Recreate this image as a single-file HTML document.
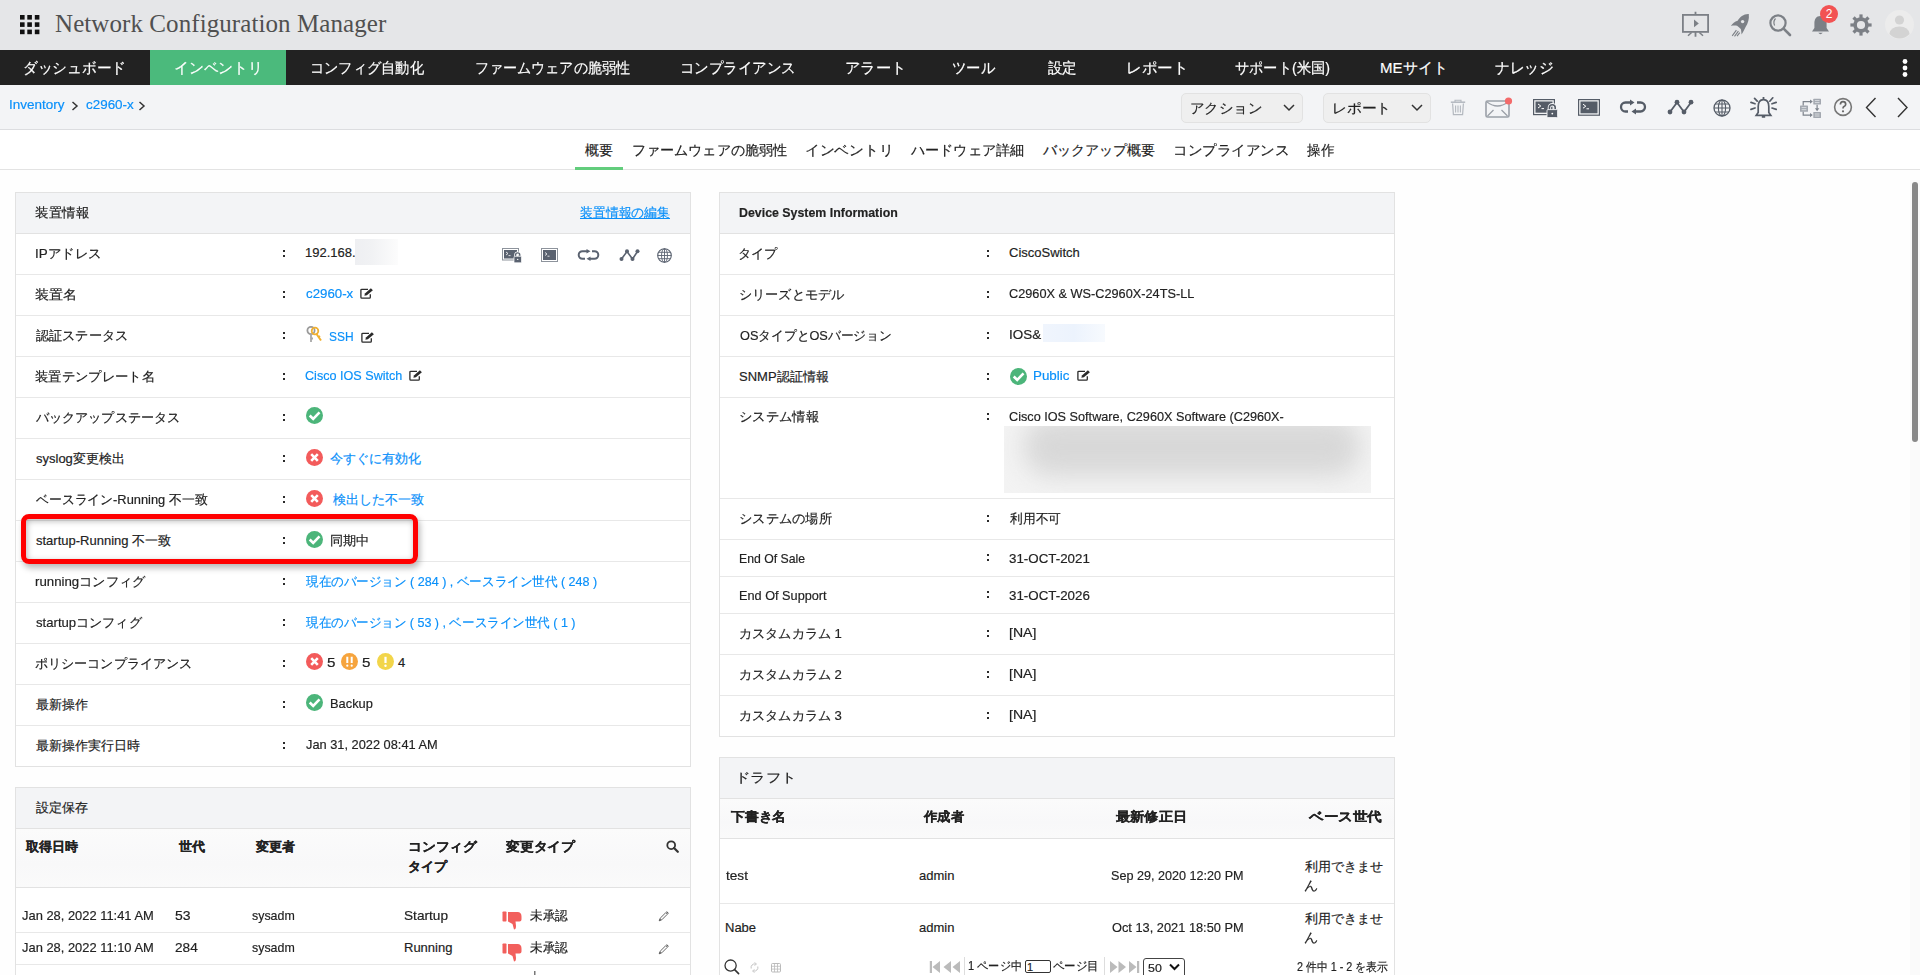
<!DOCTYPE html><html lang="ja"><head><meta charset="utf-8"><title>Network Configuration Manager</title><style>
*{box-sizing:border-box;margin:0;padding:0}
html,body{width:1920px;height:975px;overflow:hidden;background:#fefefe;font-family:"Liberation Sans",sans-serif;color:#333;font-size:13px}
.abs{position:absolute;white-space:nowrap}
.panel{position:absolute;border:1px solid #e2e2e2;background:#fff}
.hl{position:absolute;height:1px;background:#e6e6e6}
.lnk{color:#0a90fa}
.b{font-weight:bold}
.ft{display:inline-block;transform-origin:0 50%}
.abs>.ft,.tx{-webkit-text-stroke:0.18px currentColor}
</style></head><body>
<div class="abs" style="left:0px;top:0px;width:1920px;height:50px;background:#e5e6e8"></div>
<svg class="abs" style="left:20px;top:15px" width="20" height="20" viewBox="0 0 20 20"><g fill="#111"><rect x="0" y="0" width="4.6" height="4.6"/><rect x="7.3" y="0" width="4.6" height="4.6"/><rect x="14.8" y="0" width="4.6" height="4.6"/><rect x="0" y="7.3" width="4.6" height="4.6"/><rect x="7.3" y="7.3" width="4.6" height="4.6"/><rect x="14.8" y="7.3" width="4.6" height="4.6"/><rect x="0" y="14.6" width="4.6" height="4.6"/><rect x="7.3" y="14.6" width="4.6" height="4.6"/><rect x="14.8" y="14.6" width="4.6" height="4.6"/></g></svg>
<div class="abs" style="left:55px;top:10px;font-family:'Liberation Serif',serif;font-size:25px;color:#505050;letter-spacing:0.08px">Network Configuration Manager</div>
<svg class="abs" style="left:1682px;top:11px" width="28" height="27" viewBox="0 0 28 27"><rect x="0.9" y="3.9" width="25.2" height="17" fill="none" stroke="#7c8086" stroke-width="1.8"/><path d="M13.5 0.8 V4 M13.5 21 V25.8" stroke="#7c8086" stroke-width="1.8"/><path d="M9.6 21.5 L6 24.8 M17.4 21.5 L21 24.8" stroke="#7c8086" stroke-width="1.5"/><path d="M12 8.6 L16.8 12.4 L12 16.2 Z" fill="#7c8086"/></svg>
<svg class="abs" style="left:1730px;top:13px" width="21" height="24" viewBox="0 0 21 24"><path d="M18.8 1 C19.4 6 18 10.5 15.6 14 C14.6 16.5 13 19 11.6 21.6 C11.3 19.2 11.3 17.6 10.8 15.9 C9.6 14.9 8.2 13.9 7.1 12.8 C5.1 12.4 3 12.4 0.9 13 C2.4 10.6 4.8 8.6 7.6 7.8 C9.8 3.8 14 0.7 18.8 1 Z" fill="#7c8086"/><circle cx="12.6" cy="8.6" r="1.7" fill="#e5e6e8"/><path d="M2.2 22.8 L6.4 17.2 M4.5 23.3 L8.4 18.2 M7 23.2 L9.8 19.6" stroke="#7c8086" stroke-width="1.1"/></svg>
<svg class="abs" style="left:1769px;top:14px" width="23" height="23" viewBox="0 0 23 23"><circle cx="9" cy="9" r="7.6" fill="none" stroke="#7c8086" stroke-width="2.2"/><path d="M6.5 4.5 Q3.8 7.5 5.6 11.4" fill="none" stroke="#7c8086" stroke-width="1.2"/><path d="M14.6 14.6 L21 21" stroke="#7c8086" stroke-width="2.6" stroke-linecap="round"/></svg>
<svg class="abs" style="left:1811px;top:14px" width="19" height="22" viewBox="0 0 19 22"><path d="M9.5 2 C5 2 3.4 5.5 3.4 9.5 V14 L1 17.6 H18 L15.6 14 V9.5 C15.6 5.5 14 2 9.5 2 Z" fill="#7c8086"/><path d="M7.3 18.8 Q9.5 21.6 11.7 18.8 Z" fill="#7c8086"/></svg>
<svg class="abs" style="left:1820px;top:5px" width="18" height="18" viewBox="0 0 18 18"><circle cx="9" cy="9" r="9" fill="#f25353"/><text x="9" y="13.3" font-size="12" text-anchor="middle" fill="#fff" font-family="Liberation Sans">2</text></svg>
<svg class="abs" style="left:1850px;top:14px" width="22" height="22" viewBox="0 0 22 22"><rect x="9.4" y="0.4" width="3.2" height="4.2" fill="#7c8086" transform="rotate(0 11 11)"/><rect x="9.4" y="0.4" width="3.2" height="4.2" fill="#7c8086" transform="rotate(45 11 11)"/><rect x="9.4" y="0.4" width="3.2" height="4.2" fill="#7c8086" transform="rotate(90 11 11)"/><rect x="9.4" y="0.4" width="3.2" height="4.2" fill="#7c8086" transform="rotate(135 11 11)"/><rect x="9.4" y="0.4" width="3.2" height="4.2" fill="#7c8086" transform="rotate(180 11 11)"/><rect x="9.4" y="0.4" width="3.2" height="4.2" fill="#7c8086" transform="rotate(225 11 11)"/><rect x="9.4" y="0.4" width="3.2" height="4.2" fill="#7c8086" transform="rotate(270 11 11)"/><rect x="9.4" y="0.4" width="3.2" height="4.2" fill="#7c8086" transform="rotate(315 11 11)"/><circle cx="11" cy="11" r="5.9" fill="none" stroke="#7c8086" stroke-width="3.6"/></svg>
<svg class="abs" style="left:1885px;top:10px" width="29" height="29" viewBox="0 0 29 29"><circle cx="14.5" cy="14.5" r="14.5" fill="#ececec"/><circle cx="14.5" cy="10" r="4.6" fill="#d3d3d3"/><path d="M4.4 24 Q5.5 16.5 14.5 16.5 Q23.5 16.5 24.6 24 Q20 28.5 14.5 28.5 Q9 28.5 4.4 24 Z" fill="#d3d3d3"/></svg>
<div class="abs" style="left:0px;top:50px;width:1920px;height:35px;background:#222"></div>
<div class="abs" style="left:150px;top:50px;width:136px;height:35px;background:#4bba7c"></div>
<div class="abs" style="left:23.04px;top:57.5px;height:20px;line-height:20px;font-size:15px;color:#fff;"><span class="ft" style="transform:scaleX(0.9802)">ダッシュボード</span></div>
<div class="abs" style="left:174.02px;top:57.5px;height:20px;line-height:20px;font-size:15px;color:#fff;"><span class="ft" style="transform:scaleX(0.9881)">インベントリ</span></div>
<div class="abs" style="left:310.10px;top:57.5px;height:20px;line-height:20px;font-size:15px;color:#fff;"><span class="ft" style="transform:scaleX(0.9492)">コンフィグ自動化</span></div>
<div class="abs" style="left:475.12px;top:57.5px;height:20px;line-height:20px;font-size:15px;color:#fff;"><span class="ft" style="transform:scaleX(0.9387)">ファームウェアの脆弱性</span></div>
<div class="abs" style="left:680.07px;top:57.5px;height:20px;line-height:20px;font-size:15px;color:#fff;"><span class="ft" style="transform:scaleX(0.9655)">コンプライアンス</span></div>
<div class="abs" style="left:844.98px;top:57.5px;height:20px;line-height:20px;font-size:15px;color:#fff;"><span class="ft" style="transform:scaleX(1.0182)">アラート</span></div>
<div class="abs" style="left:952.05px;top:57.5px;height:20px;line-height:20px;font-size:15px;color:#fff;"><span class="ft" style="transform:scaleX(0.9545)">ツール</span></div>
<div class="abs" style="left:1048.00px;top:57.5px;height:20px;line-height:20px;font-size:15px;color:#fff;"><span class="ft" style="transform:scaleX(0.9655)">設定</span></div>
<div class="abs" style="left:1125.93px;top:57.5px;height:20px;line-height:20px;font-size:15px;color:#fff;"><span class="ft" style="transform:scaleX(1.0370)">レポート</span></div>
<div class="abs" style="left:1235.05px;top:57.5px;height:20px;line-height:20px;font-size:15px;color:#fff;"><span class="ft" style="transform:scaleX(0.9490)">サポート(米国)</span></div>
<div class="abs" style="left:1380.00px;top:57.5px;height:20px;line-height:20px;font-size:15px;color:#fff;"><span class="ft" style="transform:scaleX(1.0000)">MEサイト</span></div>
<div class="abs" style="left:1495.02px;top:57.5px;height:20px;line-height:20px;font-size:15px;color:#fff;"><span class="ft" style="transform:scaleX(0.9828)">ナレッジ</span></div>
<svg class="abs" style="left:1901px;top:58px" width="8" height="20" viewBox="0 0 8 20"><circle cx="4" cy="3.5" r="2.4" fill="#fff"/><circle cx="4" cy="10" r="2.4" fill="#fff"/><circle cx="4" cy="16.5" r="2.4" fill="#fff"/></svg>
<div class="abs" style="left:0px;top:85px;width:1920px;height:44px;background:#f3f4f6"></div>
<div class="abs" style="left:0px;top:129px;width:1920px;height:1px;background:#dcdde0"></div>
<div class="abs" style="left:8.96px;top:97.0px;height:16px;line-height:16px;font-size:13px;color:#0a90fa;"><span class="ft" style="transform:scaleX(1.0377)">Inventory</span></div>
<svg class="abs" style="left:71px;top:101px" width="8" height="10" viewBox="0 0 8 10"><path d="M1.5 1 L6 5 L1.5 9" fill="none" stroke="#333" stroke-width="1.5"/></svg>
<div class="abs" style="left:85.50px;top:97.0px;height:16px;line-height:16px;font-size:13px;color:#0a90fa;"><span class="ft" style="transform:scaleX(1.0326)">c2960-x</span></div>
<svg class="abs" style="left:138px;top:101px" width="8" height="10" viewBox="0 0 8 10"><path d="M1.5 1 L6 5 L1.5 9" fill="none" stroke="#333" stroke-width="1.5"/></svg>
<div class="abs" style="left:1181px;top:93px;width:122px;height:30px;background:#efefef;border:1px solid #e2e2e2;border-radius:5px"></div>
<div class="abs" style="left:1189.94px;top:100.0px;height:16px;line-height:16px;font-size:14px;color:#222;"><span class="ft" style="transform:scaleX(1.0299)">アクション</span></div>
<svg class="abs" style="left:1283px;top:104px" width="12" height="8" viewBox="0 0 12 8"><path d="M1 1 L6 6 L11 1" fill="none" stroke="#333" stroke-width="1.5"/></svg>
<div class="abs" style="left:1323px;top:93px;width:108px;height:30px;background:#efefef;border:1px solid #e2e2e2;border-radius:5px"></div>
<div class="abs" style="left:1332.38px;top:100.0px;height:16px;line-height:16px;font-size:14px;color:#222;"><span class="ft" style="transform:scaleX(1.0588)">レポート</span></div>
<svg class="abs" style="left:1411px;top:104px" width="12" height="8" viewBox="0 0 12 8"><path d="M1 1 L6 6 L11 1" fill="none" stroke="#333" stroke-width="1.5"/></svg>
<svg class="abs" style="left:1450px;top:99px" width="16" height="17" viewBox="0 0 16 17"><path d="M5 3 V1.2 H11 V3" fill="none" stroke="#b3b8bf" stroke-width="1.1"/><path d="M0.8 3.2 H15.2" stroke="#b3b8bf" stroke-width="1.5"/><path d="M2.6 4.5 L3.4 15.6 H12.6 L13.4 4.5" fill="none" stroke="#b3b8bf" stroke-width="1.2"/><path d="M5.6 6.5 V13.6 M8 6.5 V13.6 M10.4 6.5 V13.6" stroke="#b3b8bf" stroke-width="1.1"/></svg>
<svg class="abs" style="left:1484px;top:97px" width="29" height="22" viewBox="0 0 29 22"><rect x="2" y="4" width="23" height="16" rx="1.5" fill="none" stroke="#9ba0a8" stroke-width="1.6"/><path d="M3 5 Q13.5 13 24 5 M3.5 19 L9.5 13 M23.5 19 L17.5 13" fill="none" stroke="#9ba0a8" stroke-width="1.3"/><circle cx="24.5" cy="4" r="3.6" fill="#f36a6a"/></svg>
<svg class="abs" style="left:1533px;top:99px" width="25" height="19" viewBox="0 0 25 19"><rect x="0.6" y="0.6" width="20.8" height="15" fill="none" stroke="#555c67" stroke-width="1.2"/><rect x="2.5" y="2.5" width="17" height="11.2" fill="#555c67"/><path d="M5 5 L7.8 7 L5 9 M8.5 9.6 H11" fill="none" stroke="#fff" stroke-width="1"/><path d="M16.4 11 V8.6 A2.9 2.9 0 0 1 22.2 8.6 V11" fill="none" stroke="#f3f4f6" stroke-width="3.4"/><path d="M16.4 11 V8.6 A2.9 2.9 0 0 1 22.2 8.6 V11" fill="none" stroke="#555c67" stroke-width="1.6"/><rect x="14" y="10.6" width="10.6" height="8" rx="1" fill="#555c67" stroke="#f3f4f6" stroke-width="0.9"/><circle cx="19.3" cy="14.6" r="0.9" fill="#fff"/></svg>
<svg class="abs" style="left:1578px;top:99px" width="22" height="17" viewBox="0 0 22 17"><rect x="0.6" y="0.6" width="20.8" height="15.6" fill="none" stroke="#555c67" stroke-width="1.2"/><rect x="2.5" y="2.5" width="17" height="11.8" fill="#555c67"/><path d="M5 5.2 L7.8 7.2 L5 9.2 M8.5 9.8 H11" fill="none" stroke="#fff" stroke-width="1"/></svg>
<svg class="abs" style="left:1618px;top:99px" width="30" height="16" viewBox="0 0 30 16"><path d="M13 3.5 H7.5 A4.5 4.5 0 0 0 7.5 12.5 H10 M17 12.5 H22.5 A4.5 4.5 0 0 0 22.5 3.5 H19" fill="none" stroke="#555c67" stroke-width="2.3"/><path d="M12 0.5 L16.5 3.5 L12 6.5 Z M18 9.5 L13.5 12.5 L18 15.5 Z" fill="#555c67"/></svg>
<svg class="abs" style="left:1667px;top:99px" width="27" height="16" viewBox="0 0 27 16"><path d="M3 13 L10 3.5 L17 13 L24 3.5" fill="none" stroke="#555c67" stroke-width="1.8"/><circle cx="3" cy="13" r="2.4" fill="#555c67"/><circle cx="10" cy="3.2" r="2.4" fill="#555c67"/><circle cx="17" cy="13" r="2.4" fill="#555c67"/><circle cx="24" cy="3.2" r="2.4" fill="#555c67"/></svg>
<svg class="abs" style="left:1713px;top:99px" width="18" height="18" viewBox="0 0 18 18"><circle cx="9" cy="9" r="8" fill="none" stroke="#555c67" stroke-width="1.3"/><ellipse cx="9" cy="9" rx="3.6" ry="8" fill="none" stroke="#555c67" stroke-width="1.1"/><path d="M9 1 V17 M1 9 H17 M2 5 H16 M2 13 H16" stroke="#555c67" stroke-width="1.1"/></svg>
<svg class="abs" style="left:1750px;top:96px" width="28" height="23" viewBox="0 0 28 23"><path d="M13.5 3.6 C9.6 3.6 8.2 6.6 8.2 10.5 V16.4 L6.2 19.3 H20.8 L18.8 16.4 V10.5 C18.8 6.6 17.4 3.6 13.5 3.6 Z" fill="none" stroke="#555c67" stroke-width="1.7"/><path d="M13.5 1 V3.6 M11.8 20.8 H15.2" fill="none" stroke="#555c67" stroke-width="1.8"/><path d="M7.2 5.2 L4.6 2.4 M19.8 5.2 L22.8 1.8 M5 7.8 L1 6.4 M5 12 L1 13.4 M22 7.8 L26.2 6.4 M22 12 L26.2 13.4" stroke="#555c67" stroke-width="1.7" stroke-linecap="round"/></svg>
<svg class="abs" style="left:1799px;top:98px" width="23" height="21" viewBox="0 0 23 21"><rect x="1" y="7.5" width="8" height="6.3" rx="0.6" fill="#a3a8b0"/><path d="M2.6 9.6 H7.4 M2.6 11.7 H7.4" stroke="#e6e8eb" stroke-width="0.8"/><rect x="14.3" y="0.7" width="7.7" height="5.8" rx="0.6" fill="#a3a8b0"/><path d="M15.8 2.6 H20.5 M15.8 4.6 H20.5" stroke="#e6e8eb" stroke-width="0.8"/><rect x="14.3" y="14" width="7.7" height="6" rx="0.6" fill="#a3a8b0"/><path d="M15.8 16 H20.5 M15.8 18 H20.5" stroke="#e6e8eb" stroke-width="0.8"/><path d="M4.2 7.5 V3.6 H11.5 M4.2 13.8 V17.1 H11.5 M18.1 6.8 V10.8" fill="none" stroke="#7d838c" stroke-width="1.2"/><path d="M11 1.4 L13.8 3.6 L11 5.8 Z M11 14.9 L13.8 17.1 L11 19.3 Z M15.9 10.3 L18.1 13.2 L20.3 10.3 Z" fill="#7d838c"/></svg>
<svg class="abs" style="left:1833px;top:97px" width="20" height="20" viewBox="0 0 20 20"><circle cx="10" cy="10" r="8.4" fill="none" stroke="#777" stroke-width="1.6"/><path d="M7.4 7.6 Q7.4 4.6 10 4.6 Q12.7 4.6 12.7 7.2 Q12.7 8.8 11 9.6 Q10 10.1 10 11.6" fill="none" stroke="#666" stroke-width="1.7"/><circle cx="10" cy="14.3" r="1.1" fill="#666"/></svg>
<svg class="abs" style="left:1865px;top:97px" width="12" height="21" viewBox="0 0 12 21"><path d="M10.5 1 L1.5 10.5 L10.5 20" fill="none" stroke="#333" stroke-width="1.4"/></svg>
<svg class="abs" style="left:1897px;top:97px" width="12" height="21" viewBox="0 0 12 21"><path d="M1 1 L10 10.5 L1 20" fill="none" stroke="#333" stroke-width="1.4"/></svg>
<div class="abs" style="left:0px;top:130px;width:1920px;height:39px;background:#fff"></div>
<div class="abs" style="left:0px;top:169px;width:1920px;height:1px;background:#e3e3e3"></div>
<div class="abs" style="left:585.00px;top:141.0px;height:18px;line-height:18px;font-size:14px;color:#222;"><span class="ft" style="transform:scaleX(1.0000)">概要</span></div>
<div class="abs" style="left:631.99px;top:141.0px;height:18px;line-height:18px;font-size:14px;color:#222;"><span class="ft" style="transform:scaleX(1.0065)">ファームウェアの脆弱性</span></div>
<div class="abs" style="left:804.90px;top:141.0px;height:18px;line-height:18px;font-size:14px;color:#222;"><span class="ft" style="transform:scaleX(1.0506)">インベントリ</span></div>
<div class="abs" style="left:911.00px;top:141.0px;height:18px;line-height:18px;font-size:14px;color:#222;"><span class="ft" style="transform:scaleX(1.0090)">ハードウェア詳細</span></div>
<div class="abs" style="left:1043.00px;top:141.0px;height:18px;line-height:18px;font-size:14px;color:#222;"><span class="ft" style="transform:scaleX(1.0000)">バックアップ概要</span></div>
<div class="abs" style="left:1172.93px;top:141.0px;height:18px;line-height:18px;font-size:14px;color:#222;"><span class="ft" style="transform:scaleX(1.0370)">コンプライアンス</span></div>
<div class="abs" style="left:1307.00px;top:141.0px;height:18px;line-height:18px;font-size:14px;color:#222;"><span class="ft" style="transform:scaleX(0.9643)">操作</span></div>
<div class="abs" style="left:575px;top:167px;width:48px;height:3px;background:#62cd7c"></div>
<div class="abs" style="left:1910px;top:180px;width:10px;height:795px;background:#fafafa"></div>
<div class="abs" style="left:1912px;top:182px;width:6px;height:260px;background:#888;border-radius:3px"></div>
<div class="abs" style="left:15px;top:192px;width:676px;height:575px;background:#fff;border:1px solid #e2e2e2"></div>
<div class="abs" style="left:16px;top:193px;width:674px;height:40px;background:#f3f4f6"></div>
<div class="abs" style="left:16px;top:233px;width:674px;height:1px;background:#e2e2e2"></div>
<div class="abs" style="left:34.96px;top:205.0px;height:16px;line-height:16px;font-size:13px;color:#222;"><span class="ft" style="transform:scaleX(1.0400)">装置情報</span></div>
<div class="abs" style="left:580.00px;top:205.0px;height:16px;line-height:16px;font-size:13px;color:#0a90fa;"><span class="ft" style="transform:scaleX(0.9890)"><u>装置情報の編集</u></span></div>
<div class="abs" style="left:34.97px;top:246.0px;height:16px;line-height:16px;font-size:13px;color:#222;"><span class="ft" style="transform:scaleX(1.0323)">IPアドレス</span></div>
<div class="abs" style="left:283px;top:250px;width:2px;height:2px;background:#2a2a2a"></div>
<div class="abs" style="left:283px;top:255px;width:2px;height:2px;background:#2a2a2a"></div>
<div class="abs" style="left:16px;top:274px;width:674px;height:1px;background:#e8e8e8"></div>
<div class="abs" style="left:34.92px;top:287.0px;height:16px;line-height:16px;font-size:13px;color:#222;"><span class="ft" style="transform:scaleX(1.0833)">装置名</span></div>
<div class="abs" style="left:283px;top:291px;width:2px;height:2px;background:#2a2a2a"></div>
<div class="abs" style="left:283px;top:296px;width:2px;height:2px;background:#2a2a2a"></div>
<div class="abs" style="left:16px;top:315px;width:674px;height:1px;background:#e8e8e8"></div>
<div class="abs" style="left:36.00px;top:328.0px;height:16px;line-height:16px;font-size:13px;color:#222;"><span class="ft" style="transform:scaleX(1.0111)">認証ステータス</span></div>
<div class="abs" style="left:283px;top:332px;width:2px;height:2px;background:#2a2a2a"></div>
<div class="abs" style="left:283px;top:337px;width:2px;height:2px;background:#2a2a2a"></div>
<div class="abs" style="left:16px;top:356px;width:674px;height:1px;background:#e8e8e8"></div>
<div class="abs" style="left:34.97px;top:369.0px;height:16px;line-height:16px;font-size:13px;color:#222;"><span class="ft" style="transform:scaleX(1.0263)">装置テンプレート名</span></div>
<div class="abs" style="left:283px;top:373px;width:2px;height:2px;background:#2a2a2a"></div>
<div class="abs" style="left:283px;top:378px;width:2px;height:2px;background:#2a2a2a"></div>
<div class="abs" style="left:16px;top:397px;width:674px;height:1px;background:#e8e8e8"></div>
<div class="abs" style="left:36.00px;top:410.0px;height:16px;line-height:16px;font-size:13px;color:#222;"><span class="ft" style="transform:scaleX(1.0070)">バックアップステータス</span></div>
<div class="abs" style="left:283px;top:414px;width:2px;height:2px;background:#2a2a2a"></div>
<div class="abs" style="left:283px;top:419px;width:2px;height:2px;background:#2a2a2a"></div>
<div class="abs" style="left:16px;top:438px;width:674px;height:1px;background:#e8e8e8"></div>
<div class="abs" style="left:36.00px;top:451.0px;height:16px;line-height:16px;font-size:13px;color:#222;"><span class="ft" style="transform:scaleX(1.0000)">syslog変更検出</span></div>
<div class="abs" style="left:283px;top:455px;width:2px;height:2px;background:#2a2a2a"></div>
<div class="abs" style="left:283px;top:460px;width:2px;height:2px;background:#2a2a2a"></div>
<div class="abs" style="left:16px;top:479px;width:674px;height:1px;background:#e8e8e8"></div>
<div class="abs" style="left:36.00px;top:492.0px;height:16px;line-height:16px;font-size:13px;color:#222;"><span class="ft" style="transform:scaleX(0.9884)">ベースライン-Running 不一致</span></div>
<div class="abs" style="left:283px;top:496px;width:2px;height:2px;background:#2a2a2a"></div>
<div class="abs" style="left:283px;top:501px;width:2px;height:2px;background:#2a2a2a"></div>
<div class="abs" style="left:16px;top:520px;width:674px;height:1px;background:#e8e8e8"></div>
<div class="abs" style="left:36.00px;top:533.0px;height:16px;line-height:16px;font-size:13px;color:#222;"><span class="ft" style="transform:scaleX(1.0000)">startup-Running 不一致</span></div>
<div class="abs" style="left:283px;top:537px;width:2px;height:2px;background:#2a2a2a"></div>
<div class="abs" style="left:283px;top:542px;width:2px;height:2px;background:#2a2a2a"></div>
<div class="abs" style="left:16px;top:561px;width:674px;height:1px;background:#e8e8e8"></div>
<div class="abs" style="left:34.98px;top:574.0px;height:16px;line-height:16px;font-size:13px;color:#222;"><span class="ft" style="transform:scaleX(1.0187)">runningコンフィグ</span></div>
<div class="abs" style="left:283px;top:578px;width:2px;height:2px;background:#2a2a2a"></div>
<div class="abs" style="left:283px;top:583px;width:2px;height:2px;background:#2a2a2a"></div>
<div class="abs" style="left:16px;top:602px;width:674px;height:1px;background:#e8e8e8"></div>
<div class="abs" style="left:36.00px;top:615.0px;height:16px;line-height:16px;font-size:13px;color:#222;"><span class="ft" style="transform:scaleX(1.0095)">startupコンフィグ</span></div>
<div class="abs" style="left:283px;top:619px;width:2px;height:2px;background:#2a2a2a"></div>
<div class="abs" style="left:283px;top:624px;width:2px;height:2px;background:#2a2a2a"></div>
<div class="abs" style="left:16px;top:643px;width:674px;height:1px;background:#e8e8e8"></div>
<div class="abs" style="left:34.99px;top:656.0px;height:16px;line-height:16px;font-size:13px;color:#222;"><span class="ft" style="transform:scaleX(1.0065)">ポリシーコンプライアンス</span></div>
<div class="abs" style="left:283px;top:660px;width:2px;height:2px;background:#2a2a2a"></div>
<div class="abs" style="left:283px;top:665px;width:2px;height:2px;background:#2a2a2a"></div>
<div class="abs" style="left:16px;top:684px;width:674px;height:1px;background:#e8e8e8"></div>
<div class="abs" style="left:36.00px;top:697.0px;height:16px;line-height:16px;font-size:13px;color:#222;"><span class="ft" style="transform:scaleX(1.0000)">最新操作</span></div>
<div class="abs" style="left:283px;top:701px;width:2px;height:2px;background:#2a2a2a"></div>
<div class="abs" style="left:283px;top:706px;width:2px;height:2px;background:#2a2a2a"></div>
<div class="abs" style="left:16px;top:725px;width:674px;height:1px;background:#e8e8e8"></div>
<div class="abs" style="left:36.00px;top:738.0px;height:16px;line-height:16px;font-size:13px;color:#222;"><span class="ft" style="transform:scaleX(1.0000)">最新操作実行日時</span></div>
<div class="abs" style="left:283px;top:742px;width:2px;height:2px;background:#2a2a2a"></div>
<div class="abs" style="left:283px;top:747px;width:2px;height:2px;background:#2a2a2a"></div>
<div class="abs" style="left:305.00px;top:244.5px;height:16px;line-height:16px;font-size:13px;color:#222;"><span class="ft" style="transform:scaleX(1.0000)">192.168.</span></div>
<div class="abs" style="left:355px;top:239px;width:43px;height:26px;background:linear-gradient(90deg,#eeeff2 0%,#f1f2f4 40%,#fcfcfc 100%)"></div>
<svg class="abs" style="left:502px;top:248px" width="20" height="15" viewBox="0 0 20 15"><rect x="0.5" y="0.5" width="16" height="11.5" fill="none" stroke="#8d939c" stroke-width="1"/><rect x="2" y="2" width="13" height="8.5" fill="#5a6270"/><path d="M4 4 L6 5.5 L4 7 M6.5 7.6 H8.5" fill="none" stroke="#fff" stroke-width="0.8"/><path d="M13.6 8.6 V7 A2.1 2.1 0 0 1 17.8 7 V8.6" fill="none" stroke="#fff" stroke-width="2.8"/><path d="M13.6 8.6 V7 A2.1 2.1 0 0 1 17.8 7 V8.6" fill="none" stroke="#5a6270" stroke-width="1.3"/><rect x="12" y="8.3" width="7.5" height="6.5" rx="0.8" fill="#5a6270" stroke="#fff" stroke-width="0.7"/><circle cx="15.7" cy="11.4" r="0.7" fill="#fff"/></svg>
<svg class="abs" style="left:541px;top:248px" width="17" height="14" viewBox="0 0 17 14"><rect x="0.5" y="0.5" width="16" height="13" fill="none" stroke="#8d939c" stroke-width="1"/><rect x="2" y="2" width="13" height="10" fill="#5a6270"/><path d="M4 4.5 L6 6 L4 7.5 M6.5 8.2 H8.5" fill="none" stroke="#fff" stroke-width="0.8"/></svg>
<svg class="abs" style="left:577px;top:249px" width="23" height="12" viewBox="0 0 23 12"><path d="M10 2.2 H5.5 A3.8 3.8 0 0 0 5.5 9.8 H8 M13 9.8 H17.5 A3.8 3.8 0 0 0 17.5 2.2 H15" fill="none" stroke="#5a6270" stroke-width="2"/><path d="M9.5 0 L13.5 2.2 L9.5 4.4 Z M13.5 7.6 L9.5 9.8 L13.5 12 Z" fill="#5a6270"/></svg>
<svg class="abs" style="left:619px;top:249px" width="21" height="12" viewBox="0 0 21 12"><path d="M2.5 10 L8 2.5 L13.5 10 L18.5 2.5" fill="none" stroke="#5a6270" stroke-width="1.6"/><circle cx="2.5" cy="10" r="2" fill="#5a6270"/><circle cx="8" cy="2.3" r="2" fill="#5a6270"/><circle cx="13.5" cy="10" r="2" fill="#5a6270"/><circle cx="18.5" cy="2.3" r="2" fill="#5a6270"/></svg>
<svg class="abs" style="left:657px;top:248px" width="15" height="15" viewBox="0 0 15 15"><circle cx="7.5" cy="7.5" r="6.8" fill="none" stroke="#5a6270" stroke-width="1.1"/><ellipse cx="7.5" cy="7.5" rx="3" ry="6.8" fill="none" stroke="#5a6270" stroke-width="0.9"/><path d="M7.5 0.7 V14.3 M0.7 7.5 H14.3 M1.6 4.3 H13.4 M1.6 10.7 H13.4" stroke="#5a6270" stroke-width="0.9"/></svg>
<div class="abs" style="left:306.00px;top:285.5px;height:16px;line-height:16px;font-size:13px;color:#0a90fa;"><span class="ft" style="transform:scaleX(1.0217)">c2960-x</span></div>
<svg class="abs" style="left:360px;top:288px" width="14" height="11" viewBox="0 0 14 11"><path d="M8 1.3 H1.8 Q0.9 1.3 0.9 2.2 V9.2 Q0.9 10.1 1.8 10.1 H9.4 Q10.3 10.1 10.3 9.2 V6.2" fill="none" stroke="#2b2b2b" stroke-width="1.3"/><path d="M4.4 7.8 L4.9 5.5 L10.9 0.3 L12.9 2.2 L6.9 7.3 Z" fill="#2b2b2b"/></svg>
<svg class="abs" style="left:306px;top:326px" width="16" height="17" viewBox="0 0 16 17"><circle cx="5" cy="4.5" r="3.6" fill="none" stroke="#9a9a9a" stroke-width="1.8"/><path d="M5 8 V16 M5 12.5 H7" stroke="#a8a8a8" stroke-width="1.8"/><circle cx="9" cy="5" r="3.3" fill="none" stroke="#f0b030" stroke-width="1.8"/><path d="M10.5 8 L15 14.5 M12.5 11 L14 10" stroke="#f0b030" stroke-width="2"/></svg>
<div class="abs" style="left:329.08px;top:328.5px;height:16px;line-height:16px;font-size:13px;color:#0a90fa;"><span class="ft" style="transform:scaleX(0.9200)">SSH</span></div>
<svg class="abs" style="left:361px;top:332px" width="14" height="11" viewBox="0 0 14 11"><path d="M8 1.3 H1.8 Q0.9 1.3 0.9 2.2 V9.2 Q0.9 10.1 1.8 10.1 H9.4 Q10.3 10.1 10.3 9.2 V6.2" fill="none" stroke="#2b2b2b" stroke-width="1.3"/><path d="M4.4 7.8 L4.9 5.5 L10.9 0.3 L12.9 2.2 L6.9 7.3 Z" fill="#2b2b2b"/></svg>
<div class="abs" style="left:305.03px;top:367.5px;height:16px;line-height:16px;font-size:13px;color:#0a90fa;"><span class="ft" style="transform:scaleX(0.9697)">Cisco IOS Switch</span></div>
<svg class="abs" style="left:409px;top:370px" width="14" height="11" viewBox="0 0 14 11"><path d="M8 1.3 H1.8 Q0.9 1.3 0.9 2.2 V9.2 Q0.9 10.1 1.8 10.1 H9.4 Q10.3 10.1 10.3 9.2 V6.2" fill="none" stroke="#2b2b2b" stroke-width="1.3"/><path d="M4.4 7.8 L4.9 5.5 L10.9 0.3 L12.9 2.2 L6.9 7.3 Z" fill="#2b2b2b"/></svg>
<svg class="abs" style="left:306.1px;top:407.0px" width="17" height="17" viewBox="0 0 17 17"><circle cx="8.5" cy="8.5" r="8.5" fill="#4cb57a"/><path d="M3.7 8.5 L7.2 11.9 L13.5 5.4" fill="none" stroke="#fff" stroke-width="2.6"/></svg>
<svg class="abs" style="left:306.1px;top:448.5px" width="17" height="17" viewBox="0 0 17 17"><circle cx="8.5" cy="8.5" r="8.5" fill="#f35b5b"/><path d="M5.2 5.2 L11.8 11.8 M11.8 5.2 L5.2 11.8" fill="none" stroke="#fff" stroke-width="2.6"/></svg>
<div class="abs" style="left:330.00px;top:451.0px;height:16px;line-height:16px;font-size:13px;color:#0a90fa;"><span class="ft" style="transform:scaleX(1.0000)">今すぐに有効化</span></div>
<svg class="abs" style="left:306.1px;top:489.5px" width="17" height="17" viewBox="0 0 17 17"><circle cx="8.5" cy="8.5" r="8.5" fill="#f35b5b"/><path d="M5.2 5.2 L11.8 11.8 M11.8 5.2 L5.2 11.8" fill="none" stroke="#fff" stroke-width="2.6"/></svg>
<div class="abs" style="left:333.00px;top:492.0px;height:16px;line-height:16px;font-size:13px;color:#0a90fa;"><span class="ft" style="transform:scaleX(1.0000)">検出した不一致</span></div>
<svg class="abs" style="left:306.1px;top:530.5px" width="17" height="17" viewBox="0 0 17 17"><circle cx="8.5" cy="8.5" r="8.5" fill="#4cb57a"/><path d="M3.7 8.5 L7.2 11.9 L13.5 5.4" fill="none" stroke="#fff" stroke-width="2.6"/></svg>
<div class="abs" style="left:329.99px;top:533.0px;height:16px;line-height:16px;font-size:13px;color:#222;"><span class="ft" style="transform:scaleX(1.0135)">同期中</span></div>
<div class="abs" style="left:306.00px;top:574.0px;height:16px;line-height:16px;font-size:13px;color:#0a90fa;"><span class="ft" style="transform:scaleX(0.9668)">現在のバージョン ( 284 ) , ベースライン世代 ( 248 )</span></div>
<div class="abs" style="left:306.00px;top:615.0px;height:16px;line-height:16px;font-size:13px;color:#0a90fa;"><span class="ft" style="transform:scaleX(0.9642)">現在のバージョン ( 53 ) , ベースライン世代 ( 1 )</span></div>
<svg class="abs" style="left:306.1px;top:652.5px" width="17" height="17" viewBox="0 0 17 17"><circle cx="8.5" cy="8.5" r="8.5" fill="#f35b5b"/><path d="M5.2 5.2 L11.8 11.8 M11.8 5.2 L5.2 11.8" fill="none" stroke="#fff" stroke-width="2.6"/></svg>
<div class="abs" style="left:326.83px;top:654.5px;height:16px;line-height:16px;font-size:13px;color:#222;"><span class="ft" style="transform:scaleX(1.1667)">5</span></div>
<svg class="abs" style="left:341px;top:653px" width="17" height="17" viewBox="0 0 17 17"><circle cx="8.5" cy="8.5" r="8.5" fill="#f6a43d"/><path d="M6.3 3.8 V10 M10.7 3.8 V10" stroke="#fff" stroke-width="2"/><circle cx="6.3" cy="12.7" r="1.1" fill="#fff"/><circle cx="10.7" cy="12.7" r="1.1" fill="#fff"/></svg>
<div class="abs" style="left:361.83px;top:654.5px;height:16px;line-height:16px;font-size:13px;color:#222;"><span class="ft" style="transform:scaleX(1.1667)">5</span></div>
<svg class="abs" style="left:377px;top:653px" width="17" height="17" viewBox="0 0 17 17"><circle cx="8.5" cy="8.5" r="8.5" fill="#f2d54a"/><path d="M8.5 3.8 V10" stroke="#fff" stroke-width="2.2"/><circle cx="8.5" cy="12.7" r="1.2" fill="#fff"/></svg>
<div class="abs" style="left:398.00px;top:654.5px;height:16px;line-height:16px;font-size:13px;color:#222;"><span class="ft" style="transform:scaleX(1.0000)">4</span></div>
<svg class="abs" style="left:306.1px;top:694.0px" width="17" height="17" viewBox="0 0 17 17"><circle cx="8.5" cy="8.5" r="8.5" fill="#4cb57a"/><path d="M3.7 8.5 L7.2 11.9 L13.5 5.4" fill="none" stroke="#fff" stroke-width="2.6"/></svg>
<div class="abs" style="left:330.01px;top:695.5px;height:16px;line-height:16px;font-size:13px;color:#222;"><span class="ft" style="transform:scaleX(0.9881)">Backup</span></div>
<div class="abs" style="left:306.00px;top:736.5px;height:16px;line-height:16px;font-size:13px;color:#222;"><span class="ft" style="transform:scaleX(0.9850)">Jan 31, 2022 08:41 AM</span></div>
<div class="abs" style="left:21px;top:514px;width:397px;height:50px;border:5.5px solid #ff0000;border-radius:8px;box-shadow:2px 4px 6px rgba(0,0,0,0.28), inset 1px 2px 6px rgba(0,0,0,0.28)"></div>
<div class="abs" style="left:719px;top:192px;width:676px;height:545px;background:#fff;border:1px solid #e2e2e2"></div>
<div class="abs" style="left:720px;top:193px;width:674px;height:40px;background:#f3f4f6"></div>
<div class="abs" style="left:720px;top:233px;width:674px;height:1px;background:#e2e2e2"></div>
<div class="abs" style="left:739.05px;top:205.0px;height:16px;line-height:16px;font-size:13px;color:#222;font-weight:bold;"><span class="ft" style="transform:scaleX(0.9515)">Device System Information</span></div>
<div class="abs" style="left:737.97px;top:246.0px;height:16px;line-height:16px;font-size:13px;color:#222;"><span class="ft" style="transform:scaleX(1.0135)">タイプ</span></div>
<div class="abs" style="left:987px;top:250px;width:2px;height:2px;background:#2a2a2a"></div>
<div class="abs" style="left:987px;top:255px;width:2px;height:2px;background:#2a2a2a"></div>
<div class="abs" style="left:720px;top:274px;width:674px;height:1px;background:#e8e8e8"></div>
<div class="abs" style="left:738.99px;top:287.0px;height:16px;line-height:16px;font-size:13px;color:#222;"><span class="ft" style="transform:scaleX(1.0097)">シリーズとモデル</span></div>
<div class="abs" style="left:987px;top:291px;width:2px;height:2px;background:#2a2a2a"></div>
<div class="abs" style="left:987px;top:296px;width:2px;height:2px;background:#2a2a2a"></div>
<div class="abs" style="left:720px;top:315px;width:674px;height:1px;background:#e8e8e8"></div>
<div class="abs" style="left:740.00px;top:328.0px;height:16px;line-height:16px;font-size:13px;color:#222;"><span class="ft" style="transform:scaleX(0.9805)">OSタイプとOSバージョン</span></div>
<div class="abs" style="left:987px;top:332px;width:2px;height:2px;background:#2a2a2a"></div>
<div class="abs" style="left:987px;top:337px;width:2px;height:2px;background:#2a2a2a"></div>
<div class="abs" style="left:720px;top:356px;width:674px;height:1px;background:#e8e8e8"></div>
<div class="abs" style="left:739.00px;top:369.0px;height:16px;line-height:16px;font-size:13px;color:#222;"><span class="ft" style="transform:scaleX(1.0000)">SNMP認証情報</span></div>
<div class="abs" style="left:987px;top:373px;width:2px;height:2px;background:#2a2a2a"></div>
<div class="abs" style="left:987px;top:378px;width:2px;height:2px;background:#2a2a2a"></div>
<div class="abs" style="left:720px;top:397px;width:674px;height:1px;background:#e8e8e8"></div>
<div class="abs" style="left:738.97px;top:409.0px;height:16px;line-height:16px;font-size:13px;color:#222;"><span class="ft" style="transform:scaleX(1.0263)">システム情報</span></div>
<div class="abs" style="left:987px;top:413px;width:2px;height:2px;background:#2a2a2a"></div>
<div class="abs" style="left:987px;top:418px;width:2px;height:2px;background:#2a2a2a"></div>
<div class="abs" style="left:720px;top:498px;width:674px;height:1px;background:#e8e8e8"></div>
<div class="abs" style="left:738.98px;top:511.0px;height:16px;line-height:16px;font-size:13px;color:#222;"><span class="ft" style="transform:scaleX(1.0225)">システムの場所</span></div>
<div class="abs" style="left:987px;top:515px;width:2px;height:2px;background:#2a2a2a"></div>
<div class="abs" style="left:987px;top:520px;width:2px;height:2px;background:#2a2a2a"></div>
<div class="abs" style="left:720px;top:539px;width:674px;height:1px;background:#e8e8e8"></div>
<div class="abs" style="left:739.06px;top:550.5px;height:16px;line-height:16px;font-size:13px;color:#222;"><span class="ft" style="transform:scaleX(0.9420)">End Of Sale</span></div>
<div class="abs" style="left:987px;top:554px;width:2px;height:2px;background:#2a2a2a"></div>
<div class="abs" style="left:987px;top:559px;width:2px;height:2px;background:#2a2a2a"></div>
<div class="abs" style="left:720px;top:576px;width:674px;height:1px;background:#e8e8e8"></div>
<div class="abs" style="left:739.02px;top:587.5px;height:16px;line-height:16px;font-size:13px;color:#222;"><span class="ft" style="transform:scaleX(0.9775)">End Of Support</span></div>
<div class="abs" style="left:987px;top:591px;width:2px;height:2px;background:#2a2a2a"></div>
<div class="abs" style="left:987px;top:596px;width:2px;height:2px;background:#2a2a2a"></div>
<div class="abs" style="left:720px;top:613px;width:674px;height:1px;background:#e8e8e8"></div>
<div class="abs" style="left:738.99px;top:626.0px;height:16px;line-height:16px;font-size:13px;color:#222;"><span class="ft" style="transform:scaleX(1.0100)">カスタムカラム 1</span></div>
<div class="abs" style="left:987px;top:630px;width:2px;height:2px;background:#2a2a2a"></div>
<div class="abs" style="left:987px;top:635px;width:2px;height:2px;background:#2a2a2a"></div>
<div class="abs" style="left:720px;top:654px;width:674px;height:1px;background:#e8e8e8"></div>
<div class="abs" style="left:738.99px;top:667.0px;height:16px;line-height:16px;font-size:13px;color:#222;"><span class="ft" style="transform:scaleX(1.0100)">カスタムカラム 2</span></div>
<div class="abs" style="left:987px;top:671px;width:2px;height:2px;background:#2a2a2a"></div>
<div class="abs" style="left:987px;top:676px;width:2px;height:2px;background:#2a2a2a"></div>
<div class="abs" style="left:720px;top:695px;width:674px;height:1px;background:#e8e8e8"></div>
<div class="abs" style="left:738.99px;top:708.0px;height:16px;line-height:16px;font-size:13px;color:#222;"><span class="ft" style="transform:scaleX(1.0100)">カスタムカラム 3</span></div>
<div class="abs" style="left:987px;top:712px;width:2px;height:2px;background:#2a2a2a"></div>
<div class="abs" style="left:987px;top:717px;width:2px;height:2px;background:#2a2a2a"></div>
<div class="abs" style="left:1009.00px;top:244.5px;height:16px;line-height:16px;font-size:13px;color:#222;"><span class="ft" style="transform:scaleX(1.0000)">CiscoSwitch</span></div>
<div class="abs" style="left:1009.02px;top:285.5px;height:16px;line-height:16px;font-size:13px;color:#222;"><span class="ft" style="transform:scaleX(0.9787)">C2960X &amp; WS-C2960X-24TS-LL</span></div>
<div class="abs" style="left:1008.97px;top:326.5px;height:16px;line-height:16px;font-size:13px;color:#222;"><span class="ft" style="transform:scaleX(1.0333)">IOS&amp;</span></div>
<div class="abs" style="left:1043px;top:324px;width:62px;height:18px;background:linear-gradient(90deg,#f0f5fd 0%,#ecf3fd 50%,#f7fafe 100%)"></div>
<svg class="abs" style="left:1010.0px;top:367.5px" width="17" height="17" viewBox="0 0 17 17"><circle cx="8.5" cy="8.5" r="8.5" fill="#4cb57a"/><path d="M3.7 8.5 L7.2 11.9 L13.5 5.4" fill="none" stroke="#fff" stroke-width="2.6"/></svg>
<div class="abs" style="left:1032.97px;top:367.5px;height:16px;line-height:16px;font-size:13px;color:#0a90fa;"><span class="ft" style="transform:scaleX(1.0294)">Public</span></div>
<svg class="abs" style="left:1077px;top:370px" width="14" height="11" viewBox="0 0 14 11"><path d="M8 1.3 H1.8 Q0.9 1.3 0.9 2.2 V9.2 Q0.9 10.1 1.8 10.1 H9.4 Q10.3 10.1 10.3 9.2 V6.2" fill="none" stroke="#2b2b2b" stroke-width="1.3"/><path d="M4.4 7.8 L4.9 5.5 L10.9 0.3 L12.9 2.2 L6.9 7.3 Z" fill="#2b2b2b"/></svg>
<div class="abs" style="left:1009.02px;top:408.5px;height:16px;line-height:16px;font-size:13px;color:#222;"><span class="ft" style="transform:scaleX(0.9751)">Cisco IOS Software, C2960X Software (C2960X-</span></div>
<div class="abs" style="left:1004px;top:426px;width:367px;height:67px;overflow:hidden;background:#f3f3f3"><div class="abs" style="left:20px;top:-8px;width:336px;height:58px;background:#d8d8d8;border-radius:26px;filter:blur(12px)"></div></div>
<div class="abs" style="left:1010.00px;top:511.0px;height:16px;line-height:16px;font-size:13px;color:#222;"><span class="ft" style="transform:scaleX(0.9808)">利用不可</span></div>
<div class="abs" style="left:1008.97px;top:550.5px;height:16px;line-height:16px;font-size:13px;color:#222;"><span class="ft" style="transform:scaleX(1.0260)">31-OCT-2021</span></div>
<div class="abs" style="left:1008.97px;top:587.5px;height:16px;line-height:16px;font-size:13px;color:#222;"><span class="ft" style="transform:scaleX(1.0260)">31-OCT-2026</span></div>
<div class="abs" style="left:1008.92px;top:624.5px;height:16px;line-height:16px;font-size:13px;color:#222;"><span class="ft" style="transform:scaleX(1.0833)">[NA]</span></div>
<div class="abs" style="left:1008.92px;top:665.5px;height:16px;line-height:16px;font-size:13px;color:#222;"><span class="ft" style="transform:scaleX(1.0833)">[NA]</span></div>
<div class="abs" style="left:1008.92px;top:706.5px;height:16px;line-height:16px;font-size:13px;color:#222;"><span class="ft" style="transform:scaleX(1.0833)">[NA]</span></div>
<div class="abs" style="left:15px;top:787px;width:676px;height:200px;background:#fff;border:1px solid #e2e2e2"></div>
<div class="abs" style="left:16px;top:788px;width:674px;height:40px;background:#f3f4f6"></div>
<div class="abs" style="left:16px;top:828px;width:674px;height:1px;background:#e2e2e2"></div>
<div class="abs" style="left:16px;top:829px;width:674px;height:58px;background:linear-gradient(#fbfbfb,#f8f8f9 60%,#fafafa)"></div>
<div class="abs" style="left:16px;top:887px;width:674px;height:1px;background:#e2e2e2"></div>
<div class="abs" style="left:36.00px;top:800.0px;height:16px;line-height:16px;font-size:13px;color:#222;"><span class="ft" style="transform:scaleX(1.0000)">設定保存</span></div>
<div class="abs" style="left:26.00px;top:839.0px;height:16px;line-height:16px;font-size:13px;color:#222;font-weight:bold;"><span class="ft" style="transform:scaleX(1.0000)">取得日時</span></div>
<div class="abs" style="left:179.00px;top:839.0px;height:16px;line-height:16px;font-size:13px;color:#222;font-weight:bold;"><span class="ft" style="transform:scaleX(1.0000)">世代</span></div>
<div class="abs" style="left:256.00px;top:839.0px;height:16px;line-height:16px;font-size:13px;color:#222;font-weight:bold;"><span class="ft" style="transform:scaleX(1.0000)">変更者</span></div>
<div class="abs" style="left:407.94px;top:839.0px;height:16px;line-height:16px;font-size:13px;color:#222;font-weight:bold;"><span class="ft" style="transform:scaleX(1.0615)">コンフィグ</span></div>
<div class="abs" style="left:408.00px;top:859.0px;height:16px;line-height:16px;font-size:13px;color:#222;font-weight:bold;"><span class="ft" style="transform:scaleX(1.0000)">タイプ</span></div>
<div class="abs" style="left:506.00px;top:839.0px;height:16px;line-height:16px;font-size:13px;color:#222;font-weight:bold;"><span class="ft" style="transform:scaleX(1.0606)">変更タイプ</span></div>
<svg class="abs" style="left:666px;top:840px" width="13" height="13" viewBox="0 0 13 13"><circle cx="5.2" cy="5.2" r="3.9" fill="none" stroke="#333" stroke-width="1.8"/><path d="M8 8 L11.8 11.8" stroke="#333" stroke-width="2.2" stroke-linecap="round"/></svg>
<div class="abs" style="left:16px;top:932px;width:674px;height:1px;background:#e8e8e8"></div>
<div class="abs" style="left:16px;top:964px;width:674px;height:1px;background:#e8e8e8"></div>
<div class="abs" style="left:22.00px;top:907.5px;height:16px;line-height:16px;font-size:13px;color:#222;"><span class="ft" style="transform:scaleX(0.9924)">Jan 28, 2022 11:41 AM</span></div>
<div class="abs" style="left:174.92px;top:907.5px;height:16px;line-height:16px;font-size:13px;color:#222;"><span class="ft" style="transform:scaleX(1.0769)">53</span></div>
<div class="abs" style="left:252.00px;top:907.5px;height:16px;line-height:16px;font-size:13px;color:#222;"><span class="ft" style="transform:scaleX(0.9545)">sysadm</span></div>
<div class="abs" style="left:403.95px;top:907.5px;height:16px;line-height:16px;font-size:13px;color:#222;"><span class="ft" style="transform:scaleX(1.0488)">Startup</span></div>
<svg class="abs" style="left:502px;top:910.5px" width="21" height="19" viewBox="0 0 21 19"><rect x="0.5" y="0.5" width="4" height="10" rx="0.8" fill="#f25f5c"/><path d="M6 1 H15.5 Q19.5 1 19.5 5.5 V8.5 Q19.5 10.5 17.5 10.5 H13.5 L14 15 Q14 18.5 12 18.5 L10.5 13 L6 10.5 Z" fill="#f25f5c"/></svg>
<div class="abs" style="left:530.00px;top:907.5px;height:16px;line-height:16px;font-size:13px;color:#222;"><span class="ft" style="transform:scaleX(0.9744)">未承認</span></div>
<svg class="abs" style="left:658px;top:911.0px" width="11" height="11" viewBox="0 0 11 11"><path d="M1.2 9.8 L2.2 7.2 L7.6 1.8 L9.2 3.4 L3.8 8.8 Z" fill="none" stroke="#555" stroke-width="0.9"/><path d="M8.4 0.6 L10.4 2.6" stroke="#555" stroke-width="1.1"/><path d="M1.2 9.8 L2 7.8 L3.2 9 Z" fill="#555"/></svg>
<div class="abs" style="left:22.00px;top:940.0px;height:16px;line-height:16px;font-size:13px;color:#222;"><span class="ft" style="transform:scaleX(0.9924)">Jan 28, 2022 11:10 AM</span></div>
<div class="abs" style="left:174.95px;top:940.0px;height:16px;line-height:16px;font-size:13px;color:#222;"><span class="ft" style="transform:scaleX(1.0476)">284</span></div>
<div class="abs" style="left:252.00px;top:940.0px;height:16px;line-height:16px;font-size:13px;color:#222;"><span class="ft" style="transform:scaleX(0.9545)">sysadm</span></div>
<div class="abs" style="left:404.00px;top:940.0px;height:16px;line-height:16px;font-size:13px;color:#222;"><span class="ft" style="transform:scaleX(1.0000)">Running</span></div>
<svg class="abs" style="left:502px;top:943px" width="21" height="19" viewBox="0 0 21 19"><rect x="0.5" y="0.5" width="4" height="10" rx="0.8" fill="#f25f5c"/><path d="M6 1 H15.5 Q19.5 1 19.5 5.5 V8.5 Q19.5 10.5 17.5 10.5 H13.5 L14 15 Q14 18.5 12 18.5 L10.5 13 L6 10.5 Z" fill="#f25f5c"/></svg>
<div class="abs" style="left:530.00px;top:940.0px;height:16px;line-height:16px;font-size:13px;color:#222;"><span class="ft" style="transform:scaleX(0.9744)">未承認</span></div>
<svg class="abs" style="left:658px;top:943.5px" width="11" height="11" viewBox="0 0 11 11"><path d="M1.2 9.8 L2.2 7.2 L7.6 1.8 L9.2 3.4 L3.8 8.8 Z" fill="none" stroke="#555" stroke-width="0.9"/><path d="M8.4 0.6 L10.4 2.6" stroke="#555" stroke-width="1.1"/><path d="M1.2 9.8 L2 7.8 L3.2 9 Z" fill="#555"/></svg>
<svg class="abs" style="left:533px;top:970px" width="4" height="5" viewBox="0 0 4 5"><rect x="1" y="1" width="1.5" height="4" fill="#777"/></svg>
<div class="abs" style="left:719px;top:757px;width:676px;height:230px;background:#fff;border:1px solid #e2e2e2"></div>
<div class="abs" style="left:720px;top:758px;width:674px;height:40px;background:#f3f4f6"></div>
<div class="abs" style="left:720px;top:798px;width:674px;height:1px;background:#e2e2e2"></div>
<div class="abs" style="left:720px;top:799px;width:674px;height:39px;background:linear-gradient(#fbfbfb,#f8f8f9 60%,#fafafa)"></div>
<div class="abs" style="left:720px;top:838px;width:674px;height:1px;background:#e2e2e2"></div>
<div class="abs" style="left:735.09px;top:770.0px;height:16px;line-height:16px;font-size:13px;color:#222;"><span class="ft" style="transform:scaleX(1.1818)">ドラフト</span></div>
<div class="abs" style="left:731.00px;top:809.0px;height:16px;line-height:16px;font-size:13px;color:#222;font-weight:bold;"><span class="ft" style="transform:scaleX(1.0588)">下書き名</span></div>
<div class="abs" style="left:924.02px;top:809.0px;height:16px;line-height:16px;font-size:13px;color:#222;font-weight:bold;"><span class="ft" style="transform:scaleX(1.0250)">作成者</span></div>
<div class="abs" style="left:1116.00px;top:809.0px;height:16px;line-height:16px;font-size:13px;color:#222;font-weight:bold;"><span class="ft" style="transform:scaleX(1.0952)">最新修正日</span></div>
<div class="abs" style="left:1309.00px;top:809.0px;height:16px;line-height:16px;font-size:13px;color:#222;font-weight:bold;"><span class="ft" style="transform:scaleX(1.1231)">ベース世代</span></div>
<div class="abs" style="left:720px;top:903px;width:674px;height:1px;background:#e8e8e8"></div>
<div class="abs" style="left:726.00px;top:868.0px;height:16px;line-height:16px;font-size:13px;color:#222;"><span class="ft" style="transform:scaleX(1.0476)">test</span></div>
<div class="abs" style="left:919.00px;top:868.0px;height:16px;line-height:16px;font-size:13px;color:#222;"><span class="ft" style="transform:scaleX(1.0000)">admin</span></div>
<div class="abs" style="left:1111.03px;top:868.0px;height:16px;line-height:16px;font-size:13px;color:#222;"><span class="ft" style="transform:scaleX(0.9704)">Sep 29, 2020 12:20 PM</span></div>
<div class="abs" style="left:1305.00px;top:859.0px;height:16px;line-height:16px;font-size:13px;color:#222;"><span class="ft" style="transform:scaleX(1.0000)">利用できませ</span></div>
<div class="abs" style="left:1303.91px;top:878.0px;height:16px;line-height:16px;font-size:13px;color:#222;"><span class="ft" style="transform:scaleX(1.0909)">ん</span></div>
<div class="abs" style="left:725.00px;top:920.0px;height:16px;line-height:16px;font-size:13px;color:#222;"><span class="ft" style="transform:scaleX(1.0000)">Nabe</span></div>
<div class="abs" style="left:919.00px;top:920.0px;height:16px;line-height:16px;font-size:13px;color:#222;"><span class="ft" style="transform:scaleX(1.0000)">admin</span></div>
<div class="abs" style="left:1112.00px;top:920.0px;height:16px;line-height:16px;font-size:13px;color:#222;"><span class="ft" style="transform:scaleX(0.9850)">Oct 13, 2021 18:50 PM</span></div>
<div class="abs" style="left:1305.00px;top:911.0px;height:16px;line-height:16px;font-size:13px;color:#222;"><span class="ft" style="transform:scaleX(1.0000)">利用できませ</span></div>
<div class="abs" style="left:1303.91px;top:930.0px;height:16px;line-height:16px;font-size:13px;color:#222;"><span class="ft" style="transform:scaleX(1.0909)">ん</span></div>
<svg class="abs" style="left:724px;top:959px" width="16" height="16" viewBox="0 0 16 16"><circle cx="6.6" cy="6.6" r="5.6" fill="none" stroke="#333" stroke-width="1.3"/><path d="M10.6 10.6 L14.6 14.6" stroke="#333" stroke-width="1.6" stroke-linecap="round"/></svg>
<svg class="abs" style="left:749px;top:962px" width="11" height="11" viewBox="0 0 11 11"><path d="M2.2 6.5 A3.6 3.6 0 0 1 6.5 2 M8.8 4.5 A3.6 3.6 0 0 1 4.5 9" fill="none" stroke="#c4c4c4" stroke-width="1"/><path d="M5.5 0.5 L7.5 2 L5.5 3.5 M5.5 7.5 L3.5 9 L5.5 10.5" fill="none" stroke="#c4c4c4" stroke-width="0.9"/></svg>
<svg class="abs" style="left:771px;top:963px" width="10" height="10" viewBox="0 0 10 10"><rect x="0.5" y="0.5" width="9" height="8.5" rx="1" fill="none" stroke="#bbb" stroke-width="1"/><path d="M0.5 3.3 H9.5 M0.5 6.1 H9.5 M3.5 0.5 V9 M6.5 0.5 V9" stroke="#bbb" stroke-width="0.8"/></svg>
<svg class="abs" style="left:929px;top:960px" width="32" height="14" viewBox="0 0 32 14"><rect x="0.8" y="1" width="2.2" height="12" fill="#bbb"/><path d="M11 1 L3.5 7 L11 13 Z M22 1 L14.5 7 L22 13 Z M31 1 L23.5 7 L31 13 Z" fill="#bbb"/></svg>
<div class="abs" style="left:964px;top:957px;width:1px;height:18px;background:#ddd"></div>
<div class="abs" style="left:968.07px;top:958.0px;height:16px;line-height:16px;font-size:12px;color:#222;"><span class="ft" style="transform:scaleX(0.9286)">1 ページ中</span></div>
<div class="abs" style="left:1025px;top:960px;width:26px;height:13px;background:#fff;border:1px solid #333;border-radius:2px"></div>
<div class="abs" style="left:1027.00px;top:958.5px;height:16px;line-height:16px;font-size:11px;color:#222;"><span class="ft" style="transform:scaleX(1.0000)">1</span></div>
<div class="abs" style="left:1053.04px;top:958.0px;height:16px;line-height:16px;font-size:12px;color:#222;"><span class="ft" style="transform:scaleX(0.9556)">ページ目</span></div>
<div class="abs" style="left:1104px;top:957px;width:1px;height:18px;background:#ddd"></div>
<svg class="abs" style="left:1109px;top:960px" width="32" height="14" viewBox="0 0 32 14"><path d="M1 1 L8.5 7 L1 13 Z M9.5 1 L17 7 L9.5 13 Z M20 1 L27.5 7 L20 13 Z" fill="#bbb"/><rect x="28" y="1" width="2.2" height="12" fill="#bbb"/></svg>
<div class="abs" style="left:1143px;top:958px;width:42px;height:20px;background:#fff;border:1px solid #444;border-radius:3px"></div>
<div class="abs" style="left:1148.00px;top:959.5px;height:16px;line-height:16px;font-size:10.5px;color:#222;"><span class="ft" style="transform:scaleX(1.1818)">50</span></div>
<svg class="abs" style="left:1169px;top:963px" width="11" height="8" viewBox="0 0 11 8"><path d="M1 1.5 L5.5 6 L10 1.5" fill="none" stroke="#111" stroke-width="2"/></svg>
<div class="abs" style="left:1297.00px;top:958.5px;height:16px;line-height:16px;font-size:12px;color:#222;"><span class="ft" style="transform:scaleX(0.9010)">2 件中 1 - 2 を表示</span></div>
</body></html>
